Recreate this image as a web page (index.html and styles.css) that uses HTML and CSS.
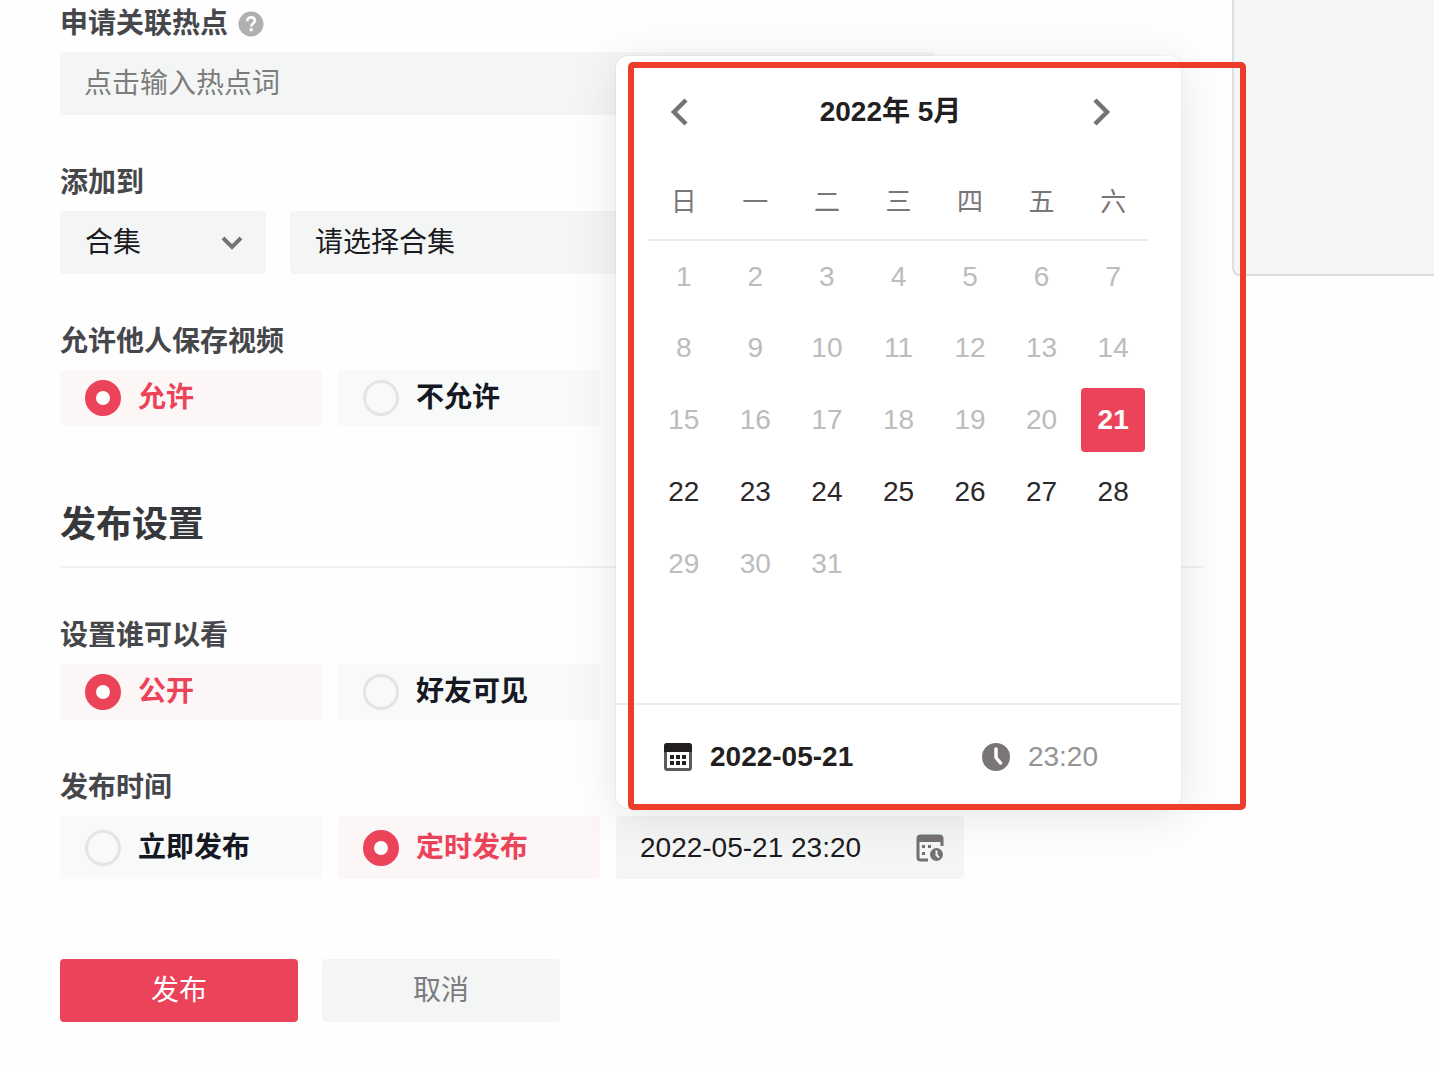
FILE: index.html
```html
<!DOCTYPE html>
<html lang="zh-CN">
<head>
    <meta charset="UTF-8">
    <meta name="viewport" content="width=device-width, initial-scale=1.0">
    <title>发布视频</title>
    <link rel="stylesheet" href="styles.css">
</head>
<body>
    <div class="page">
        <form class="publish-form">
            <div class="form-group">
                <div class="form-label">
                    <label for="hotspot">申请关联热点</label>
                    <svg class="help-icon" viewBox="0 0 26 26" aria-hidden="true">
                        <circle cx="13" cy="13" r="12.5" fill="#b0b0b0"/>
                        <path d="M9.2 10.2C9.2 7.9 10.8 6.4 13.1 6.4s3.8 1.4 3.8 3.4c0 2.6-3.7 2.8-3.7 5.6" fill="none" stroke="#fff" stroke-width="2.6"/>
                        <rect x="11.7" y="17.2" width="3" height="3" fill="#fff"/>
                    </svg>
                </div>
                <input class="text-input" type="text" id="hotspot" placeholder="点击输入热点词">
            </div>

            <div class="form-group">
                <label class="form-label" for="addType">添加到</label>
                <div class="select-row">
                    <div class="select-box select-type">
                        <select id="addType">
                            <option>合集</option>
                        </select>
                        <svg class="select-arrow" viewBox="0 0 24 16" aria-hidden="true">
                            <path d="M3 3l9 9 9-9" fill="none" stroke="#777273" stroke-width="4"/>
                        </svg>
                    </div>
                    <div class="select-box select-collection">
                        <select aria-label="选择合集">
                            <option>请选择合集</option>
                        </select>
                    </div>
                </div>
            </div>

            <div class="form-group">
                <div class="form-label" id="saveLabel">允许他人保存视频</div>
                <div class="radio-row" role="radiogroup" aria-labelledby="saveLabel">
                    <label class="radio-card"><input type="radio" name="save" checked><span>允许</span></label>
                    <label class="radio-card"><input type="radio" name="save"><span>不允许</span></label>
                </div>
            </div>

            <h2>发布设置</h2>

            <div class="form-group">
                <div class="form-label" id="viewLabel">设置谁可以看</div>
                <div class="radio-row" role="radiogroup" aria-labelledby="viewLabel">
                    <label class="radio-card"><input type="radio" name="view" checked><span>公开</span></label>
                    <label class="radio-card"><input type="radio" name="view"><span>好友可见</span></label>
                </div>
            </div>

            <div class="form-group">
                <div class="form-label" id="timeLabel">发布时间</div>
                <div class="radio-row radio-row-tall" role="radiogroup" aria-labelledby="timeLabel">
                    <label class="radio-card"><input type="radio" name="time"><span>立即发布</span></label>
                    <label class="radio-card"><input type="radio" name="time" checked><span>定时发布</span></label>

                    <div class="date-field">
                        <input class="date-input" type="text" value="2022-05-21 23:20" aria-label="定时发布时间">
                        <svg class="date-icon" viewBox="0 0 28 28" aria-hidden="true">
                            <path d="M12 26H4.500Q2 26 2 23.500V4.500Q2 2 4.500 2H23.500Q26 2 26 4.500V12" fill="none" stroke="#757172" stroke-width="3"/>
                            <path d="M1 2h26v6H1z" fill="#757172"/>
                            <path d="M6 11h3v3H6zM12 11h3v3h-3zM6 18h3v3H6z" fill="#757172"/>
                            <circle cx="20.500" cy="20.500" r="6.500" fill="#757172"/>
                            <path d="M20.500 16.500v4.500l2.500 2.500" fill="none" stroke="#f4f6f5" stroke-width="2"/>
                        </svg>

                        <div class="picker">
                            <div class="picker-header">
                                <button type="button" class="picker-nav" aria-label="上个月">
                                    <svg viewBox="0 0 20 28" aria-hidden="true"><path d="M16 2L4 14l12 12" fill="none" stroke="#777273" stroke-width="4.500"/></svg>
                                </button>
                                <span class="picker-title">2022年 5月</span>
                                <button type="button" class="picker-nav" aria-label="下个月">
                                    <svg viewBox="0 0 20 28" aria-hidden="true"><path d="M4 2l12 12L4 26" fill="none" stroke="#777273" stroke-width="4.500"/></svg>
                                </button>
                            </div>
                            <table class="calendar">
                                <thead>
                                    <tr><th>日</th><th>一</th><th>二</th><th>三</th><th>四</th><th>五</th><th>六</th></tr>
                                </thead>
                                <tbody>
                                    <tr>
                                        <td><button type="button" disabled>1</button></td>
                                        <td><button type="button" disabled>2</button></td>
                                        <td><button type="button" disabled>3</button></td>
                                        <td><button type="button" disabled>4</button></td>
                                        <td><button type="button" disabled>5</button></td>
                                        <td><button type="button" disabled>6</button></td>
                                        <td><button type="button" disabled>7</button></td>
                                    </tr>
                                    <tr>
                                        <td><button type="button" disabled>8</button></td>
                                        <td><button type="button" disabled>9</button></td>
                                        <td><button type="button" disabled>10</button></td>
                                        <td><button type="button" disabled>11</button></td>
                                        <td><button type="button" disabled>12</button></td>
                                        <td><button type="button" disabled>13</button></td>
                                        <td><button type="button" disabled>14</button></td>
                                    </tr>
                                    <tr>
                                        <td><button type="button" disabled>15</button></td>
                                        <td><button type="button" disabled>16</button></td>
                                        <td><button type="button" disabled>17</button></td>
                                        <td><button type="button" disabled>18</button></td>
                                        <td><button type="button" disabled>19</button></td>
                                        <td><button type="button" disabled>20</button></td>
                                        <td><button type="button" class="selected">21</button></td>
                                    </tr>
                                    <tr>
                                        <td><button type="button">22</button></td>
                                        <td><button type="button">23</button></td>
                                        <td><button type="button">24</button></td>
                                        <td><button type="button">25</button></td>
                                        <td><button type="button">26</button></td>
                                        <td><button type="button">27</button></td>
                                        <td><button type="button">28</button></td>
                                    </tr>
                                    <tr>
                                        <td><button type="button" disabled>29</button></td>
                                        <td><button type="button" disabled>30</button></td>
                                        <td><button type="button" disabled>31</button></td>
                                        <td></td>
                                        <td></td>
                                        <td></td>
                                        <td></td>
                                    </tr>
                                </tbody>
                            </table>
                            <div class="picker-footer">
                                <button type="button" class="picker-tab active">
                                    <svg viewBox="0 0 28 28" aria-hidden="true">
                                        <rect x="1.500" y="1.500" width="25" height="25" rx="2" fill="#fff" stroke="#5d5859" stroke-width="3"/>
                                        <path d="M0 3q0-3 3-3h22q3 0 3 3v6H0z" fill="#231f20"/>
                                        <path d="M6 12h4v4H6zM12 12h4v4h-4zM18 12h4v4h-4zM6 18h4v4H6zM12 18h4v4h-4zM18 18h4v4h-4z" fill="#231f20"/>
                                    </svg>
                                    <span>2022-05-21</span>
                                </button>
                                <button type="button" class="picker-tab">
                                    <svg viewBox="0 0 28 28" aria-hidden="true">
                                        <circle cx="14" cy="14" r="14" fill="#7a7576"/>
                                        <path d="M14 6v8.500l4.500 5.500" fill="none" stroke="#fff" stroke-width="3.500" stroke-linecap="round"/>
                                    </svg>
                                    <span>23:20</span>
                                </button>
                            </div>
                            <div class="highlight-frame"></div>
                        </div>
                    </div>
                </div>
            </div>

            <div class="actions">
                <button type="submit" class="btn btn-primary">发布</button>
                <button type="button" class="btn">取消</button>
            </div>
        </form>
        <aside class="preview"></aside>
    </div>
</body>
</html>
```
FILE: styles.css
```css
* {
    box-sizing: border-box;
}
body {
    margin: 0;
    background: #fefefe;
    color: #1c1b22;
    font-family: "Liberation Sans", "Noto Sans CJK SC", sans-serif;
    font-size: 28px;
    line-height: 40px;
}
input, select, button {
    font: inherit;
    color: inherit;
    border: none;
    background: none;
    padding: 0;
    margin: 0;
}
button {
    cursor: pointer;
}
.page {
    display: flex;
    align-items: flex-start;
    gap: 28px;
    padding-left: 60px;
    overflow: hidden;
}
.publish-form {
    flex: 1;
    max-width: 1144px;
    padding: 4px 0 44px;
}
.form-group {
    margin-bottom: 48px;
}
.form-label {
    display: flex;
    align-items: center;
    gap: 10px;
    margin-bottom: 8px;
    color: #46474b;
    font-weight: bold;
}
.help-icon {
    width: 26px;
    height: 26px;
}
.text-input {
    display: block;
    width: 100%;
    max-width: 874px;
    height: 63px;
    padding: 0 24px;
    border-radius: 4px;
    background: #f4f6f5;
}
.text-input::placeholder {
    color: #7d7d7d;
}
.select-row {
    display: flex;
    gap: 24px;
    max-width: 874px;
}
.select-box {
    position: relative;
}
.select-type {
    width: 206px;
}
.select-collection {
    flex: 1;
}
.select-box select {
    display: block;
    width: 100%;
    height: 63px;
    padding: 0 25px;
    border-radius: 4px;
    background: #f4f6f5;
    appearance: none;
}
.select-arrow {
    position: absolute;
    top: 24px;
    right: 22px;
    width: 24px;
    height: 16px;
    pointer-events: none;
}

/* radio cards */
.radio-row {
    display: flex;
    gap: 16px;
}
.radio-card {
    display: flex;
    align-items: center;
    gap: 17px;
    width: 262px;
    height: 56px;
    padding-left: 25px;
    border-radius: 4px;
    background: #f8faf9;
    color: #161823;
    font-weight: bold;
    cursor: pointer;
}
.radio-row-tall .radio-card {
    height: 63px;
}
.radio-card input {
    width: 36px;
    height: 36px;
    border: 3px solid #e3e4e6;
    border-radius: 50%;
    appearance: none;
}
.radio-card input:checked {
    border: 11px solid #eb4359;
    background: #fff;
}
.radio-card:has(input:checked) {
    background: #fdf6f7;
    color: #eb4359;
}
h2 {
    margin: 72px 0 48px;
    padding-bottom: 14px;
    border-bottom: 2px solid #f2f2f2;
    color: #36383c;
    font-size: 36px;
    line-height: 54px;
}

/* date field and its popup */
.date-field {
    position: relative;
    width: 348px;
}
.date-input {
    display: block;
    width: 100%;
    height: 63px;
    padding: 0 24px;
    border-radius: 4px;
    background: #f4f6f5;
}
.date-icon {
    position: absolute;
    top: 18px;
    right: 20px;
    width: 28px;
    height: 28px;
    pointer-events: none;
}
.picker {
    position: absolute;
    left: 0;
    bottom: calc(100% + 8px);
    width: 565px;
    height: 752px;
    display: flex;
    flex-direction: column;
    border-radius: 12px;
    background: #fff;
    box-shadow: 0 8px 48px rgba(0, 0, 0, 0.1), 0 0 2px rgba(0, 0, 0, 0.12);
}
.picker-header {
    display: flex;
    align-items: center;
    justify-content: space-between;
    height: 108px;
    margin: 0 48px 0 32px;
    padding-top: 4px;
}
.picker-nav {
    display: flex;
    align-items: center;
    justify-content: center;
    width: 64px;
    height: 64px;
}
.picker-nav svg {
    width: 20px;
    height: 28px;
}
.picker-title {
    color: #231f20;
    font-weight: bold;
}
.calendar {
    width: 501px;
    margin: 0 32px;
    border-collapse: collapse;
    table-layout: fixed;
}
.calendar th {
    height: 76px;
    padding: 0;
    border-bottom: 2px solid #ededed;
    color: #7a7677;
    font-size: 26px;
    font-weight: normal;
}
.calendar td {
    height: 72px;
    padding: 0;
    text-align: center;
}
.calendar button {
    display: block;
    width: 64px;
    height: 64px;
    margin: 0 auto;
    border-radius: 4px;
    color: #2c2829;
}
.calendar button:disabled {
    color: #bdbbbc;
    cursor: default;
}
.calendar .selected {
    background: #eb4359;
    color: #fff;
    font-weight: bold;
}
.picker-footer {
    display: flex;
    align-items: center;
    justify-content: space-between;
    height: 105px;
    margin-top: auto;
    padding: 0 83px 0 48px;
    border-top: 2px solid #ededed;
}
.picker-tab {
    display: flex;
    align-items: center;
    gap: 18px;
    color: #969393;
}
.picker-tab svg {
    width: 28px;
    height: 28px;
}
.picker-tab.active {
    color: #231f20;
    font-weight: bold;
}
.highlight-frame {
    position: absolute;
    top: 6px;
    right: -65px;
    bottom: -2px;
    left: 12px;
    border: 6px solid #ee3c2a;
    border-radius: 5px;
    pointer-events: none;
}

.actions {
    display: flex;
    gap: 24px;
    margin-top: 80px;
}
.btn {
    width: 238px;
    height: 63px;
    border-radius: 4px;
    background: #f4f6f5;
    color: #7b7c80;
}
.btn-primary {
    background: #eb4359;
    color: #fff;
}

.preview {
    flex: 0 0 202px;
    height: 276px;
    border: 2px solid #dcdedd;
    border-width: 0 0 2px 2px;
    border-bottom-left-radius: 8px;
    background: #f4f6f5;
}
```
